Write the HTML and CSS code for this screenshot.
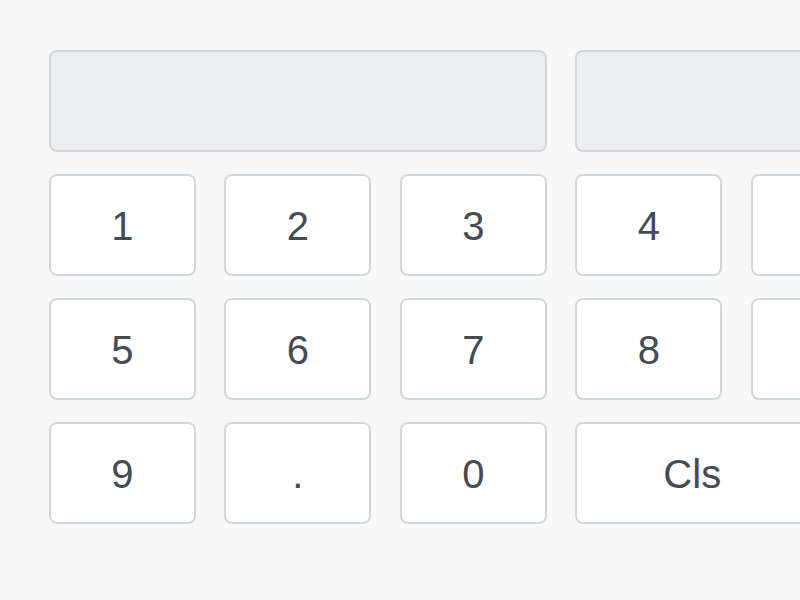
FILE: index.html
```html
<!DOCTYPE html>
<html lang="en">
<head>
<meta charset="utf-8">
<title>Calculator</title>
<link rel="stylesheet" href="styles.css">
</head>
<body>
<div class="calc">
  <div class="display display-main"></div>
  <div class="display display-side"></div>
  <button class="key">1</button>
  <button class="key">2</button>
  <button class="key">3</button>
  <button class="key">4</button>
  <button class="key" aria-label="add"></button>
  <button class="key">5</button>
  <button class="key">6</button>
  <button class="key">7</button>
  <button class="key">8</button>
  <button class="key" aria-label="subtract"></button>
  <button class="key">9</button>
  <button class="key">.</button>
  <button class="key">0</button>
  <button class="key key-wide">Cls</button>
</div>
</body>
</html>
```

FILE: styles.css
```css
html, body {
  margin: 0;
  padding: 0;
  overflow: hidden;
  background: #f8f8f9;
  width: 800px;
  height: 600px;
}

.calc {
  display: grid;
  grid-template-columns: repeat(5, 147px);
  grid-auto-rows: 102px;
  column-gap: 28.5px;
  row-gap: 22px;
  padding: 50px 0 0 48.75px;
  width: max-content;
}

.display {
  background: #eceef1;
  border: 2px solid #cfd7dd;
  border-radius: 8px;
  box-sizing: border-box;
}

.display-main {
  grid-column: 1 / span 3;
}

.display-side {
  grid-column: 4 / span 2;
}

.key {
  background: #ffffff;
  border: 2px solid #cfd7dd;
  border-radius: 8px;
  box-sizing: border-box;
  color: #434c55;
  font-family: "Liberation Sans", Arial, sans-serif;
  font-size: 40px;
  padding: 2px 0 0;
  margin: 0;
  display: flex;
  align-items: center;
  justify-content: center;
}

.key-wide {
  grid-column: 4 / span 2;
  justify-self: start;
  width: 234px;
}
```
